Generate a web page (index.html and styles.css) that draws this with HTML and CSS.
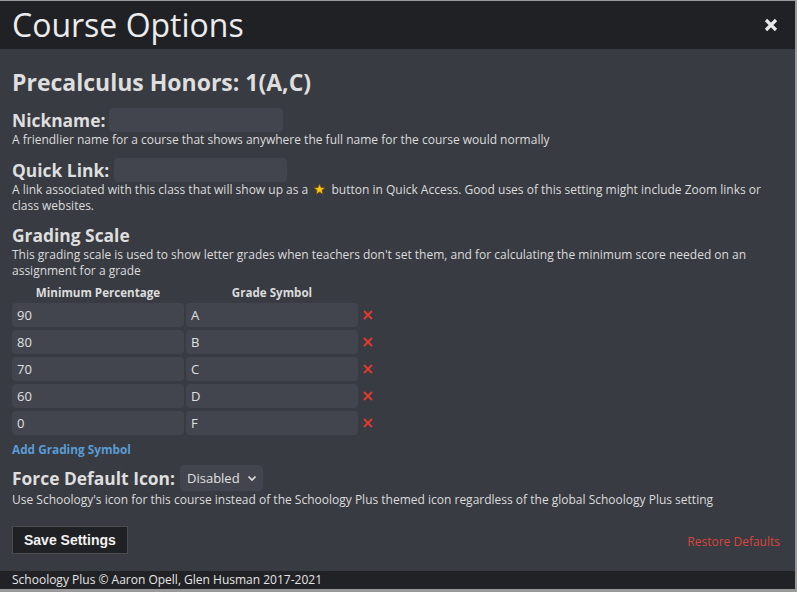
FILE: index.html
```html
<!DOCTYPE html>
<html>
<head>
<meta charset="utf-8">
<link rel="stylesheet" href="styles.css">
</head>
<body>
<div class="modal">
  <div class="header">
    <h1 class="title">Course Options</h1>
    <svg class="close" width="14" height="14" viewBox="0 0 14 14"><path d="M2 2 L12 12 M12 2 L2 12" stroke="#e8e8e8" stroke-width="3.2" stroke-linecap="butt"/></svg>
  </div>
  <div class="content">
    <h2 class="course">Precalculus Honors: 1(A,C)</h2>

    <div class="setting s-nick">
      <div class="row-label"><span class="label">Nickname:</span><span class="input nick"></span></div>
      <p class="desc">A friendlier name for a course that shows anywhere the full name for the course would normally</p>
    </div>

    <div class="setting s-link">
      <div class="row-label"><span class="label">Quick Link:</span><span class="input link"></span></div>
      <p class="desc">A link associated with this class that will show up as a <svg class="star" width="13" height="12" viewBox="0 0 24 23"><path d="M12 1.5 L15 8.6 L22.6 9.2 L16.8 14.2 L18.6 21.6 L12 17.6 L5.4 21.6 L7.2 14.2 L1.4 9.2 L9 8.6 Z" fill="#f7c21b" stroke="#6b4d00" stroke-width="1.6" stroke-linejoin="round"/></svg> button in Quick Access. Good uses of this setting might include Zoom links or class websites.</p>
    </div>

    <div class="setting s-grade">
      <div class="label">Grading Scale</div>
      <p class="desc">This grading scale is used to show letter grades when teachers don't set them, and for calculating the minimum score needed on an assignment for a grade</p>
      <div class="grid">
        <div class="th">Minimum Percentage</div><div class="th">Grade Symbol</div><div></div>
        <div class="cell">90</div><div class="cell">A</div><div class="x"><svg width="10" height="10" viewBox="0 0 10 10"><path d="M1 1 L9 9 M9 1 L1 9" stroke="#e23b30" stroke-width="1.8"/></svg></div>
        <div class="cell">80</div><div class="cell">B</div><div class="x"><svg width="10" height="10" viewBox="0 0 10 10"><path d="M1 1 L9 9 M9 1 L1 9" stroke="#e23b30" stroke-width="1.8"/></svg></div>
        <div class="cell">70</div><div class="cell">C</div><div class="x"><svg width="10" height="10" viewBox="0 0 10 10"><path d="M1 1 L9 9 M9 1 L1 9" stroke="#e23b30" stroke-width="1.8"/></svg></div>
        <div class="cell">60</div><div class="cell">D</div><div class="x"><svg width="10" height="10" viewBox="0 0 10 10"><path d="M1 1 L9 9 M9 1 L1 9" stroke="#e23b30" stroke-width="1.8"/></svg></div>
        <div class="cell">0</div><div class="cell">F</div><div class="x"><svg width="10" height="10" viewBox="0 0 10 10"><path d="M1 1 L9 9 M9 1 L1 9" stroke="#e23b30" stroke-width="1.8"/></svg></div>
      </div>
      <div class="add">Add Grading Symbol</div>
    </div>

    <div class="setting s-icon">
      <div class="row-label"><span class="label">Force Default Icon:</span><span class="select">Disabled <svg width="10" height="7" viewBox="0 0 10 7"><path d="M1.5 1.5 L5 5 L8.5 1.5" fill="none" stroke="#ddd" stroke-width="1.7"/></svg></span></div>
      <p class="desc icon-desc">Use Schoology's icon for this course instead of the Schoology Plus themed icon regardless of the global Schoology Plus setting</p>
    </div>

    <div class="actions">
      <span class="save">Save Settings</span>
      <span class="restore">Restore Defaults</span>
    </div>
  </div>
  <div class="footer">Schoology Plus &copy; Aaron Opell, Glen Husman 2017-2021</div>
</div>
</body>
</html>
```
FILE: styles.css
```css
html, body { margin: 0; padding: 0; }
body {
  background: #9a9a9a;
  width: 797px;
  height: 592px;
  overflow: hidden;
  font-family: "Open Sans", sans-serif;
  color: #dcdcdc;
}
.modal {
  margin-top: 1px;
  width: 795px;
  height: 588px;
  display: flex;
  flex-direction: column;
  background: #383b42;
}
.header {
  height: 48px;
  flex: none;
  background: #202124;
  display: flex;
  align-items: center;
  justify-content: space-between;
  padding: 0 12px;
}
.title {
  margin: 0;
  font-size: 32px;
  font-weight: 400;
  color: #ececec;
  line-height: 48px;
}
.close { margin-right: 5px; }
.content {
  flex: 1;
  padding: 16px 12px 0 12px;
}
.course {
  margin: 0 0 9px 0;
  font-size: 23px;
  font-weight: 700;
  line-height: 34px;
  color: #dedede;
}
.s-nick { margin-bottom: 10px; }
.s-link { margin-bottom: 9px; }
.s-grade { margin-bottom: 7px; }
.s-icon { margin-bottom: 18px; }
.row-label { display: flex; align-items: center; gap: 4px; }
.label {
  font-size: 17.4px;
  font-weight: 700;
  line-height: 24px;
  color: #dedede;
}
.input {
  display: inline-block;
  background: #42454d;
  border-radius: 4px;
  height: 24px;
}
.nick { width: 174px; }
.link { width: 173px; margin-left: 1px; }
.desc {
  margin: 0;
  font-size: 12px;
  line-height: 16px;
  color: #dcdcdc;
}
.icon-desc { margin-top: 1px; }
.star { vertical-align: -1px; margin: 0 2px; }
.grid {
  display: grid;
  grid-template-columns: 172px 172px 20px;
  column-gap: 2px;
  row-gap: 3px;
  margin-top: 7px;
  width: 370px;
}
.th {
  text-align: center;
  font-size: 11.6px;
  font-weight: 700;
  line-height: 14px;
  color: #dcdcdc;
}
.cell {
  background: #42454d;
  border-radius: 4px;
  height: 24px;
  line-height: 24px;
  padding-left: 5px;
  font-size: 13px;
  color: #e0e0e0;
}
.x {
  display: flex;
  align-items: center;
  padding-left: 3px;
}
.add {
  margin-top: 5px;
  font-size: 11.8px;
  font-weight: 700;
  color: #5b9bd5;
  line-height: 18px;
}
.select {
  display: inline-flex;
  align-items: center;
  gap: 7px;
  background: #42454d;
  border-radius: 4px;
  height: 26px;
  padding: 0 6px 0 7px;
  font-size: 13px;
  color: #e0e0e0;
  margin-left: 1px;
}
.actions {
  display: flex;
  justify-content: space-between;
  align-items: flex-end;
}
.save {
  font-family: "Liberation Sans", Arial, sans-serif;
  font-weight: 700;
  font-size: 14px;
  color: #f2f2f2;
  background: #202124;
  border: 1px solid #4a4c52;
  padding: 5px 11px;
  line-height: 16px;
}
.restore {
  font-size: 12px;
  color: #d9463b;
  margin-right: 3px;
  margin-bottom: 4px;
}
.footer {
  height: 18px;
  flex: none;
  background: #212225;
  font-size: 12px;
  line-height: 18px;
  padding-left: 12px;
  color: #e6e6e6;
}
```
